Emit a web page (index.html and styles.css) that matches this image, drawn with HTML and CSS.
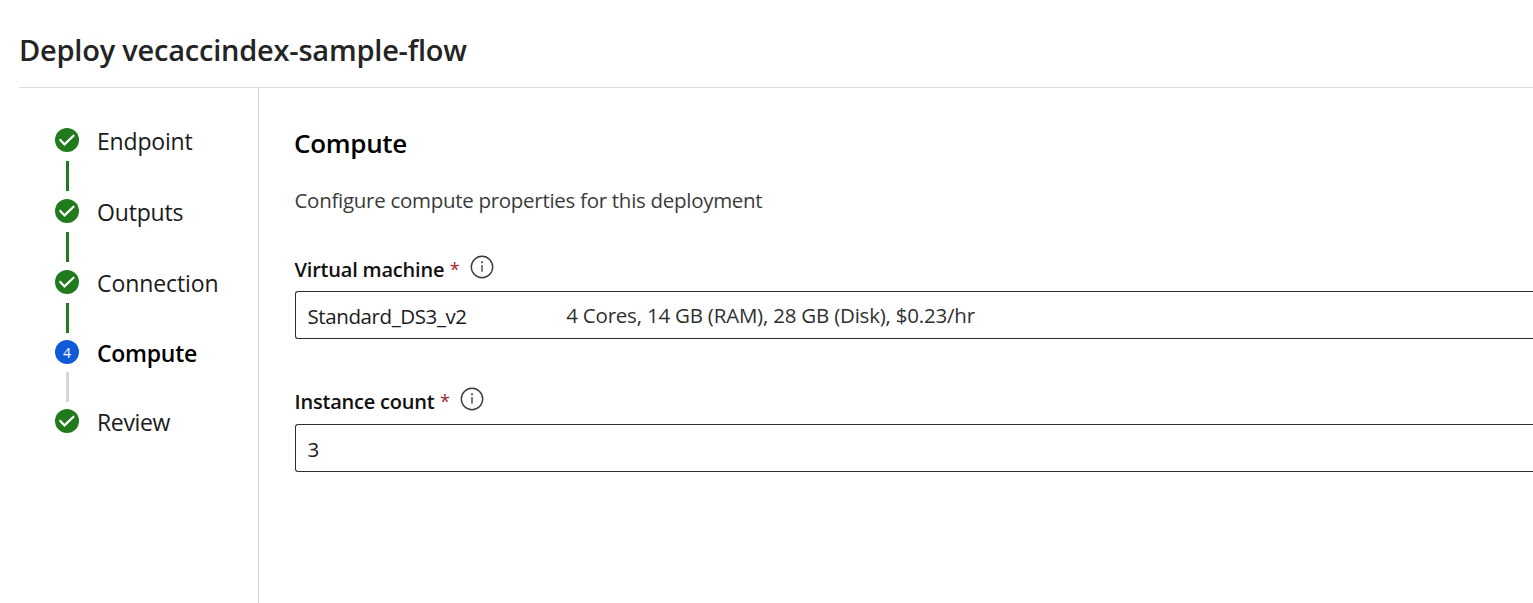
FILE: index.html
```html
<!DOCTYPE html>
<html lang="en">
<head>
<meta charset="utf-8">
<title>Deploy vecaccindex-sample-flow</title>
<link rel="stylesheet" href="styles.css">
</head>
<body>
<header class="header"><h1 class="title">Deploy vecaccindex-sample-flow</h1></header>
<div class="body">
  <nav class="steps">
    <div class="step">
      <div class="rail"><svg class="dot" viewBox="0 0 24 24"><circle cx="12" cy="12" r="12" fill="#217b1d"/><path d="M5.3 11.9l4.2 4.5 9-8.7" fill="none" stroke="#fff" stroke-width="2.2" stroke-linecap="round" stroke-linejoin="miter"/></svg><i class="line"></i></div>
      <span class="step-label">Endpoint</span>
    </div>
    <div class="step">
      <div class="rail"><svg class="dot" viewBox="0 0 24 24"><circle cx="12" cy="12" r="12" fill="#217b1d"/><path d="M5.3 11.9l4.2 4.5 9-8.7" fill="none" stroke="#fff" stroke-width="2.2" stroke-linecap="round" stroke-linejoin="miter"/></svg><i class="line"></i></div>
      <span class="step-label">Outputs</span>
    </div>
    <div class="step before-current">
      <div class="rail"><svg class="dot" viewBox="0 0 24 24"><circle cx="12" cy="12" r="12" fill="#217b1d"/><path d="M5.3 11.9l4.2 4.5 9-8.7" fill="none" stroke="#fff" stroke-width="2.2" stroke-linecap="round" stroke-linejoin="miter"/></svg><i class="line"></i></div>
      <span class="step-label connection">Connection</span>
    </div>
    <div class="step current">
      <div class="rail"><span class="dot number">4</span><i class="line"></i></div>
      <span class="step-label">Compute</span>
    </div>
    <div class="step">
      <div class="rail"><svg class="dot" viewBox="0 0 24 24"><circle cx="12" cy="12" r="12" fill="#217b1d"/><path d="M5.3 11.9l4.2 4.5 9-8.7" fill="none" stroke="#fff" stroke-width="2.2" stroke-linecap="round" stroke-linejoin="miter"/></svg></div>
      <span class="step-label review">Review</span>
    </div>
  </nav>
  <main class="content">
    <h2 class="heading">Compute</h2>
    <p class="description">Configure compute properties for this deployment</p>
    <section class="field">
      <div class="label-row"><label class="label">Virtual machine</label><span class="required">*</span><svg class="info" viewBox="0 0 24 24"><circle cx="12" cy="12" r="10.7" fill="none" stroke="#3a3a3a" stroke-width="1.4"/><path d="M12 9.9v6.9" stroke="#3a3a3a" stroke-width="1.3"/><circle cx="12" cy="7.3" r="1" fill="#3a3a3a"/></svg></div>
      <div class="box"><span class="value vm">Standard_DS3_v2</span><span class="specs">4 Cores, 14 GB (RAM), 28 GB (Disk), $0.23/hr</span></div>
    </section>
    <section class="field">
      <div class="label-row"><label class="label">Instance count</label><span class="required">*</span><svg class="info" viewBox="0 0 24 24"><circle cx="12" cy="12" r="10.7" fill="none" stroke="#3a3a3a" stroke-width="1.4"/><path d="M12 9.9v6.9" stroke="#3a3a3a" stroke-width="1.3"/><circle cx="12" cy="7.3" r="1" fill="#3a3a3a"/></svg></div>
      <div class="box"><span class="value">3</span></div>
    </section>
  </main>
</div>
</body>
</html>
```
FILE: styles.css
```css
* { box-sizing: border-box; }
body {
  margin: 0;
  height: 603px;
  overflow: hidden;
  display: flex;
  flex-direction: column;
  background: #fff;
  color: #1b1b1b;
  font-family: "Open Sans", "Noto Sans", sans-serif;
  white-space: nowrap;
}
.header {
  height: 88px;
  flex: none;
  margin-left: 19px;
  padding-top: 30px;
  border-bottom: 1px solid #dcdcdc;
}
.title { margin: 0; font-size: 29px; line-height: 40px; font-weight: 600; letter-spacing: -0.22px; color: #242424; }
.body { flex: 1; display: flex; min-height: 0; }
.steps { width: 259px; flex: none; padding: 40px 0 0 55px; border-right: 1px solid #d4d4d4; }
.step { display: flex; gap: 18px; height: 71px; }
.rail { width: 24px; display: flex; flex-direction: column; align-items: center; gap: 9px; }
.dot { width: 24px; height: 24px; flex: none; display: block; }
.number { border-radius: 50%; background: #0f5bd7; color: #fff; font-size: 14px; line-height: 25px; text-align: center; }
.line { width: 3px; height: 30px; margin-left: 1px; background: #217b1d; }
.step-label { height: 26px; font-size: 23px; line-height: 26px; letter-spacing: -0.18px; }
.connection { letter-spacing: -0.08px; }
.review { letter-spacing: -0.34px; }
.before-current { height: 70px; }
.current { height: 69px; }
.current .rail { gap: 8px; }
.current .line { background: #d6d6d6; }
.current .step-label { font-weight: 600; letter-spacing: -0.26px; color: #000; }
.content { flex: 1; padding: 37px 0 0 36px; min-width: 0; }
.heading { margin: 0 0 0 -1px; font-size: 26px; line-height: 36px; font-weight: 600; letter-spacing: -0.3px; color: #000; }
.description { margin: 24px 0 0 -0.5px; font-size: 20.5px; line-height: 30px; letter-spacing: -0.29px; color: #3b3b3b; }
.field { height: 133px; }
.description + .field { margin-top: 38px; }
.label-row { height: 38px; display: flex; padding-top: 1px; }
.field + .field .label-row { padding-top: 0; }
.label { margin-left: -0.5px; font-size: 20px; line-height: 32px; font-weight: 600; letter-spacing: -0.2px; color: #111; }
.required { margin-left: 5.5px; font-size: 18px; line-height: 30px; color: #a4262c; }
.info { width: 24px; height: 24px; margin: 0.7px 0 0 10.7px; }
.field + .field .info { margin-left: 9.8px; }
.box { height: 48px; display: flex; border: 1px solid #2d2d2d; border-right: 0; border-radius: 3px 0 0 3px; padding-left: 11.5px; font-size: 20.5px; line-height: 49px; }
.vm { width: 258.7px; letter-spacing: -0.4px; }
.specs { color: #303030; line-height: 47px; letter-spacing: -0.21px; }
```
